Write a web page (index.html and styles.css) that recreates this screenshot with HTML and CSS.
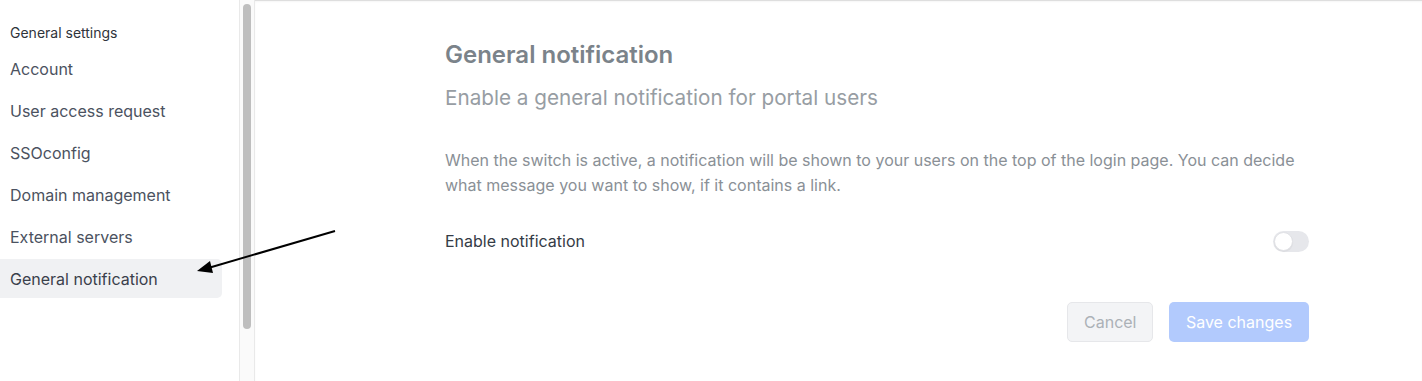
FILE: index.html
```html
<!DOCTYPE html>
<html lang="en">
<head>
    <meta charset="UTF-8">
    <meta name="viewport" content="width=device-width, initial-scale=1.0">
    <title>General notification</title>
    <link rel="stylesheet" href="styles.css">
</head>
<body>
    <div class="layout">
        <aside class="sidebar">
            <div class="sidebar-title">General settings</div>
            <nav class="menu">
                <a href="#" class="menu-item">Account</a>
                <a href="#" class="menu-item">User access request</a>
                <a href="#" class="menu-item">SSOconfig</a>
                <a href="#" class="menu-item">Domain management</a>
                <a href="#" class="menu-item">External servers</a>
                <a href="#" class="menu-item active">General notification</a>
            </nav>
        </aside>
        <div class="scroll-track">
            <div class="scroll-thumb"></div>
        </div>
        <main class="main">
            <div class="content">
                <h2 class="title">General notification</h2>
                <p class="subtitle">Enable a general notification for portal users</p>
                <p class="description">When the switch is active, a notification will be shown to your users on the top of the login page. You can decide what message you want to show, if it contains a link.</p>
                <div class="setting-row">
                    <span class="setting-label">Enable notification</span>
                    <label class="switch">
                        <input type="checkbox">
                        <span class="knob"></span>
                    </label>
                </div>
                <div class="btn-container">
                    <button class="btn btn-cancel" disabled>Cancel</button>
                    <button class="btn btn-save" disabled>Save changes</button>
                </div>
            </div>
        </main>
        <!-- annotation arrow -->
        <svg class="arrow" width="150" height="50" viewBox="0 0 150 50">
            <line x1="139" y1="3" x2="14" y2="39.5" stroke="#000" stroke-width="2"/>
            <polygon points="1,43 14,33 17,45" fill="#000"/>
        </svg>
    </div>
</body>
</html>
```

FILE: styles.css
```css
body {
    font-family: Inter, "Noto Sans", Arial, sans-serif;
    margin: 0;
    padding: 0;
    background-color: #fff;
}
.layout {
    position: relative;
    display: flex;
    height: 381px;
    overflow: hidden;
}
.sidebar {
    width: 239px;
    flex-shrink: 0;
    padding-top: 24px;
    box-sizing: border-box;
}
.sidebar-title {
    font-size: 14px;
    line-height: 18px;
    color: #2f343b;
    padding-left: 10px;
    margin-bottom: 7px;
}
.menu {
    display: flex;
    flex-direction: column;
    gap: 3px;
}
.menu-item {
    display: flex;
    align-items: center;
    width: 222px;
    height: 39px;
    box-sizing: border-box;
    padding-left: 10px;
    font-size: 16px;
    color: #4b5260;
    text-decoration: none;
    border-radius: 0 5px 5px 0;
}
.menu-item.active {
    background-color: #f0f1f3;
    color: #3a404b;
}
.scroll-track {
    width: 8px;
    flex-shrink: 0;
    background-color: #fafafa;
    border-left: 1px solid #e9e9e9;
    border-right: 1px solid #e9e9e9;
    padding: 4px 3px 0 3px;
}
.scroll-thumb {
    width: 8px;
    height: 325px;
    background-color: #bebebe;
    border-radius: 4px;
}
.main {
    flex: 1;
    border-top: 1px solid #dedede;
    box-shadow: inset 0 1px 2px rgba(0,0,0,0.04);
}
.content {
    width: 864px;
    margin-left: 190px;
    padding-top: 39px;
}
.title {
    font-size: 24px;
    line-height: 30px;
    font-weight: 600;
    color: #7b838a;
    margin: 0;
}
.subtitle {
    font-size: 20.7px;
    line-height: 28px;
    color: #979da3;
    margin: 14px 0 0;
}
.description {
    font-size: 16px;
    line-height: 25px;
    color: #8a9096;
    margin: 36px 0 0;
}
.setting-row {
    display: flex;
    justify-content: space-between;
    align-items: center;
    margin-top: 27px;
    height: 32px;
}
.setting-label {
    font-size: 16px;
    color: #343b46;
}
.switch {
    position: relative;
    width: 36px;
    height: 21px;
    display: inline-block;
}
.switch input {
    display: none;
}
.knob {
    position: absolute;
    inset: 0;
    background-color: #e6e7eb;
    border-radius: 11px;
    cursor: pointer;
}
.knob::before {
    content: "";
    position: absolute;
    left: 1px;
    top: 1px;
    width: 17px;
    height: 17px;
    border-radius: 50%;
    background-color: #fff;
    border: 1px solid #e0e1e5;
    box-shadow: 0 1px 1px rgba(0,0,0,0.05);
}
.btn-container {
    display: flex;
    justify-content: flex-end;
    gap: 16px;
    margin-top: 45px;
}
.btn {
    height: 40px;
    padding: 0 16px;
    border-radius: 5px;
    font-family: inherit;
    font-size: 16px;
    cursor: pointer;
}
.btn-cancel {
    width: 86px;
    background-color: #f3f4f6;
    border: 1px solid #e6e7ea;
    color: #acb1b7;
}
.btn-save {
    width: 140px;
    background-color: #b2cafd;
    border: none;
    color: #fff;
}
.arrow {
    position: absolute;
    left: 196px;
    top: 228px;
}
```
